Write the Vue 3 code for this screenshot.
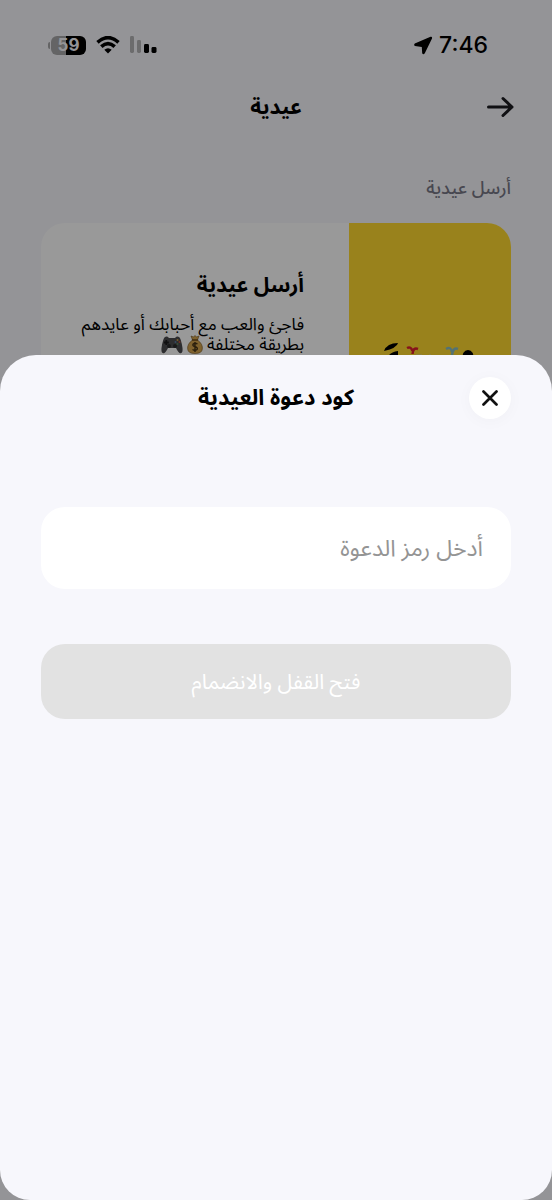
<script setup>
import { ref } from 'vue'
const code = ref('')
</script>

<template>
  <div class="screen" dir="rtl">
    <main class="page">
      <div class="status" dir="ltr">
        <div class="indicators">
          <div class="battery"><span>59</span></div>
          <svg class="wifi" width="24" height="18" viewBox="0 0 24 18" aria-hidden="true">
            <g fill="none" stroke="currentColor" stroke-width="3.6">
              <path d="M1.500 6.300Q12-3 22.500 6.300" />
              <path d="M5.300 10.700Q12 4.600 18.700 10.700" />
            </g>
            <path d="M8.300 13.800Q12 10.700 15.700 13.800L12 17.600Z" fill="currentColor" />
          </svg>
          <svg class="signal" width="28" height="18" viewBox="0 0 28 18" aria-hidden="true">
            <rect x="0" y="0" width="4" height="17" rx="1.400" fill="#b4b4b6" />
            <rect x="7" y="4" width="4" height="13" rx="1.400" fill="#b4b4b6" />
            <rect x="14" y="8" width="5" height="9" rx="1.400" fill="currentColor" />
            <rect x="21.500" y="11" width="5" height="6" rx="1.400" fill="currentColor" />
          </svg>
        </div>
        <div class="clock">
          <svg width="19" height="19" viewBox="0 0 19 19" aria-hidden="true">
            <path d="M16.500 .8L.8 7.500Q-.6 9 1 10L7.800 11.100 8.200 17.300Q9.300 19 10.800 17.300L18 2.500Q18.500.3 16.500 .8Z" fill="currentColor" />
          </svg>
          <time>7:46</time>
        </div>
      </div>

      <header class="topbar">
        <button class="back" type="button" aria-label="رجوع">
          <svg width="28" height="22" viewBox="0 0 28 22" aria-hidden="true">
            <path d="M2.500 11H26M17 2.500L26 11L17 19.500" fill="none" stroke="currentColor" stroke-width="3" stroke-linecap="round" stroke-linejoin="round" />
          </svg>
        </button>
        <h1>عيدية</h1>
      </header>

      <h2 class="section">أرسل عيدية</h2>

      <article class="card">
        <div class="art">
          <svg width="94" height="40" viewBox="0 0 94 40" aria-hidden="true">
            <path d="M1 8Q4 0 15 0Q14 5 1 8Z" fill="#000" />
            <path d="M1 24Q3 9 15 8V24H10V13Q5 15 4 24Z" fill="#000" />
            <path d="M24 5Q28 3 29.500 8M35 6Q30 4 29.500 11" fill="none" stroke="#df1f2d" stroke-width="2.500" />
            <path d="M63 6Q68 3 69 9M75 6Q70 4 69 12" fill="none" stroke="#8abfc2" stroke-width="2.500" />
            <path d="M33 12H39M46 12H48" stroke="#ddd0a0" stroke-width="1" />
            <path d="M79 18Q79 7 85 7Q91 7 91 18Z" fill="#000" />
          </svg>
        </div>
        <div class="copy">
          <h3>أرسل عيدية</h3>
          <p>
            فاجئ والعب مع أحبابك أو عايدهم بطريقة مختلفة
            <svg class="emoji bag" width="16" height="19" viewBox="0 0 16 19" role="img" aria-label="كيس نقود">
              <path d="M4 1L6.500 2L8 .5L9.500 2L12 1L10.500 5Q16 9 15.300 14Q15 18.500 8 18.500Q1 18.500.7 14Q0 9 5.500 5Z" fill="#d4a34d" stroke="#765420" stroke-width=".6" />
              <path d="M5 5H11" stroke="#6c4818" stroke-width="1.500" />
              <path d="M10.500 9Q8 7.500 6.200 9Q5 10.800 8 11.700Q11.300 12.500 10 14.500Q8 16 5.500 14.500M8 7V17" fill="none" stroke="#453316" stroke-width="1.400" />
            </svg>
            <svg class="emoji" width="22" height="18" viewBox="0 0 22 18" role="img" aria-label="ذراع ألعاب">
              <path d="M4 1Q6-.2 8 2H14Q16-.2 18 1Q20 2 21.500 12Q22 18 19 17.300Q17.500 17 15 12H7Q4.500 17 3 17.300Q0 18 .5 12Q2 2 4 1Z" fill="#4c4b4f" />
              <path d="M5.300 4V9M2.800 6.500H7.800" stroke="#19191b" stroke-width="1.800" />
              <circle cx="8" cy="10" r="2" fill="#29292b" />
              <circle cx="14" cy="10" r="2" fill="#29292b" />
              <circle cx="16.500" cy="4" r="1" fill="#c99d46" />
              <circle cx="16.500" cy="8" r="1" fill="#58855c" />
              <circle cx="14.500" cy="6" r="1" fill="#587aa6" />
              <circle cx="18.500" cy="6" r="1" fill="#c44d3d" />
            </svg>
          </p>
        </div>
      </article>
    </main>

    <div class="backdrop">
      <section class="sheet" role="dialog" aria-modal="true" aria-labelledby="sheet-title">
        <header class="sheet-head">
          <button class="close" type="button" aria-label="إغلاق">
            <svg width="16" height="16" viewBox="0 0 16 16" aria-hidden="true">
              <path d="M1.500 1.500L14.500 14.500M14.500 1.500L1.500 14.500" stroke="currentColor" stroke-width="2.700" stroke-linecap="round" />
            </svg>
          </button>
          <h2 id="sheet-title">كود دعوة العيدية</h2>
        </header>
        <form class="form" @submit.prevent>
          <input v-model="code" type="text" aria-label="رمز الدعوة" placeholder="أدخل رمز الدعوة" />
          <button class="submit" type="submit" :disabled="!code">فتح القفل والانضمام</button>
        </form>
      </section>
    </div>
  </div>
</template>

<style>
body {
  margin: 0;
  background: #f7f7fc;
}
</style>

<style scoped>
* {
  box-sizing: border-box;
}
.screen {
  position: relative;
  min-height: 100vh;
  overflow: hidden;
  font-family: "Noto Sans Arabic", "DejaVu Sans", sans-serif;
  color: #000;
}
h1, h2, h3, p {
  margin: 0;
}
button, input {
  font: inherit;
  border: 0;
}
button {
  padding: 0;
}
.page {
  padding: 0 41px;
}
.status {
  height: 78px;
  padding: 12px 23px 0 8px;
  display: flex;
  align-items: center;
  justify-content: space-between;
}
.indicators, .clock {
  display: flex;
  align-items: center;
}
.indicators {
  gap: 10px;
}
.battery {
  position: relative;
  width: 35px;
  height: 19px;
  margin-left: 2px;
  border-radius: 6px;
  background: linear-gradient(90deg, #a7a7a9 42%, #000 42%);
  color: #f7f7fc;
  font: bold 17px/19px Inter, sans-serif;
  text-align: center;
}
.battery::before {
  content: "";
  position: absolute;
  left: -3px;
  top: 6px;
  width: 2px;
  height: 7px;
  border-radius: 2px 0 0 2px;
  background: #a7a7a9;
}
.clock {
  gap: 6px;
  font: 500 23px/28px Inter, sans-serif;
}
.topbar {
  height: 58px;
  display: grid;
  grid-template-columns: 28px 1fr 28px;
  align-items: center;
  margin: 0 -3px;
}
.topbar h1 {
  font-size: 21px;
  line-height: 32px;
  text-align: center;
}
.back {
  display: flex;
  background: none;
  color: #1b1b20;
}
.section {
  margin-top: 38px;
  font-size: 18px;
  line-height: 28px;
  font-weight: 500;
  color: #777786;
}
.card {
  margin-top: 21px;
  min-height: 240px;
  display: grid;
  grid-template-columns: 162px 1fr;
  overflow: hidden;
  border-radius: 24px;
  background: #fff;
}
.art {
  display: flex;
  justify-content: center;
  padding-top: 120px;
  background: #ffd930;
}
.copy {
  padding: 46px 45px 0 24px;
}
.copy h3 {
  font-size: 21px;
  line-height: 32px;
}
.copy p {
  margin-top: 14px;
  font-size: 17px;
  line-height: 20px;
}
.emoji {
  vertical-align: -4px;
}
.bag {
  margin-left: 4px;
}
.backdrop {
  position: absolute;
  inset: 0;
  display: flex;
  padding-top: 355px;
  background: rgba(0, 0, 0, 0.4);
}
.sheet {
  flex: 1;
  padding: 22px 41px 0;
  border-radius: 36px 36px 30px 30px;
  background: #f7f7fc;
}
.sheet-head {
  display: grid;
  grid-template-columns: 42px 1fr 42px;
  align-items: center;
}
.sheet-head h2 {
  font-size: 22px;
  line-height: 32px;
  text-align: center;
}
.close {
  display: grid;
  place-items: center;
  width: 42px;
  height: 42px;
  border-radius: 50%;
  background: #fff;
  color: #111;
  box-shadow: 0 2px 16px rgba(0, 0, 0, 0.03);
}
.form {
  display: grid;
  gap: 55px;
  margin-top: 88px;
}
.form input {
  width: 100%;
  height: 82px;
  padding: 0 28px;
  border-radius: 24px;
  background: #fff;
  font-size: 23px;
}
.form input::placeholder {
  color: #949494;
  opacity: 1;
}
.submit {
  height: 75px;
  border-radius: 24px;
  background: #e2e2e2;
  color: #fff;
  font-size: 21px;
}
</style>
